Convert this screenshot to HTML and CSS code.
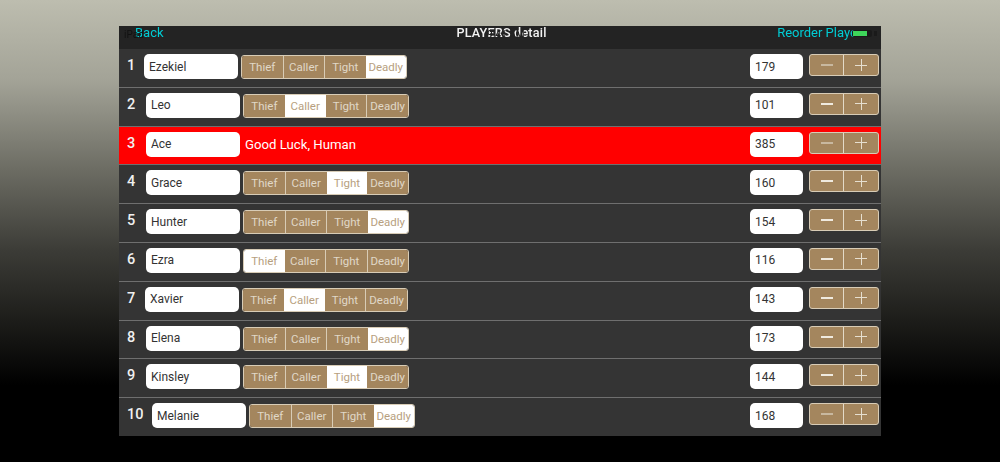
FILE: index.html
```html
<!DOCTYPE html>
<html lang="en">

<head>
    <meta charset="UTF-8">
    <meta name="viewport" content="width=device-width, initial-scale=1.0">
    <title>Players detail</title>
    <link rel="stylesheet" href="styles.css">
</head>

<body>

    <div class="panel">
        <div class="header">
            <a class="nav-link">Back</a>
            <span class="title">PLAYERS detail</span>
            <a class="nav-link nav-right">Reorder Players</a>

            <!-- device status bar shows through the nav bar -->
            <span class="status-carrier">iPad</span>
            <span class="status-time">9:41 AM</span>
            <span class="status-battery"><span class="status-charge"></span></span>
            <span class="status-bolt"></span>
        </div>

        <div class="row">
            <span class="num num-1">1</span>
            <input class="name" type="text" value="Ezekiel">
            <div class="seg">
                <button>Thief</button><button>Caller</button><button>Tight</button><button class="on">Deadly</button>
            </div>
            <input class="score" type="text" value="179">
            <div class="stepper"><button class="minus dim"></button><button class="plus"></button></div>
        </div>

        <div class="row">
            <span class="num">2</span>
            <input class="name" type="text" value="Leo">
            <div class="seg">
                <button>Thief</button><button class="on">Caller</button><button>Tight</button><button>Deadly</button>
            </div>
            <input class="score" type="text" value="101">
            <div class="stepper"><button class="minus"></button><button class="plus"></button></div>
        </div>

        <div class="row row-out">
            <span class="num">3</span>
            <input class="name" type="text" value="Ace">
            <span class="luck">Good Luck, Human</span>
            <input class="score" type="text" value="385">
            <div class="stepper"><button class="minus dim"></button><button class="plus"></button></div>
        </div>

        <div class="row">
            <span class="num">4</span>
            <input class="name" type="text" value="Grace">
            <div class="seg">
                <button>Thief</button><button>Caller</button><button class="on">Tight</button><button>Deadly</button>
            </div>
            <input class="score" type="text" value="160">
            <div class="stepper"><button class="minus"></button><button class="plus"></button></div>
        </div>

        <div class="row">
            <span class="num">5</span>
            <input class="name" type="text" value="Hunter">
            <div class="seg">
                <button>Thief</button><button>Caller</button><button>Tight</button><button class="on">Deadly</button>
            </div>
            <input class="score" type="text" value="154">
            <div class="stepper"><button class="minus"></button><button class="plus"></button></div>
        </div>

        <div class="row">
            <span class="num">6</span>
            <input class="name" type="text" value="Ezra">
            <div class="seg">
                <button class="on">Thief</button><button>Caller</button><button>Tight</button><button>Deadly</button>
            </div>
            <input class="score" type="text" value="116">
            <div class="stepper"><button class="minus"></button><button class="plus"></button></div>
        </div>

        <div class="row">
            <span class="num num-7">7</span>
            <input class="name" type="text" value="Xavier">
            <div class="seg">
                <button>Thief</button><button class="on">Caller</button><button>Tight</button><button>Deadly</button>
            </div>
            <input class="score" type="text" value="143">
            <div class="stepper"><button class="minus"></button><button class="plus"></button></div>
        </div>

        <div class="row">
            <span class="num">8</span>
            <input class="name" type="text" value="Elena">
            <div class="seg">
                <button>Thief</button><button>Caller</button><button>Tight</button><button class="on">Deadly</button>
            </div>
            <input class="score" type="text" value="173">
            <div class="stepper"><button class="minus"></button><button class="plus"></button></div>
        </div>

        <div class="row">
            <span class="num">9</span>
            <input class="name" type="text" value="Kinsley">
            <div class="seg">
                <button>Thief</button><button>Caller</button><button class="on">Tight</button><button>Deadly</button>
            </div>
            <input class="score" type="text" value="144">
            <div class="stepper"><button class="minus"></button><button class="plus"></button></div>
        </div>

        <div class="row">
            <span class="num num-10">10</span>
            <input class="name" type="text" value="Melanie">
            <div class="seg">
                <button>Thief</button><button>Caller</button><button>Tight</button><button class="on">Deadly</button>
            </div>
            <input class="score" type="text" value="168">
            <div class="stepper"><button class="minus dim"></button><button class="plus"></button></div>
        </div>
    </div>

</body>

</html>
```

FILE: styles.css
```css
html,
body {
    height: 100%;
}

body {
    margin: 0;
    overflow: hidden;
    font-family: 'Roboto', 'Liberation Sans', sans-serif;
    background: linear-gradient(to bottom, #bdbdaf 0, #a3a397 80px, #6c6c63 170px, #3c3c37 250px, #1d1d1a 320px, #000 385px);
}

.panel {
    width: 762px;
    height: 410px;
    margin: 26px auto 0;
    display: flex;
    flex-direction: column;
    background-color: #343434;
    /* the capture is a little soft */
    filter: blur(0.4px);
}

.header {
    position: relative;
    flex: 0 0 23px;
    box-sizing: border-box;
    display: grid;
    grid-template-columns: 1fr auto 1fr;
    align-items: center;
    padding: 0 13px 9px 16px;
    line-height: 14px;
    background-color: #232323;
}

.nav-link {
    font-size: 13px;
    color: #00ccd4;
}

.nav-right {
    text-align: right;
}

.title {
    font-size: 12.6px;
    font-weight: 500;
    letter-spacing: 0.2px;
    color: #f2f2f2;
}

.status-carrier {
    position: absolute;
    left: 5px;
    top: 2px;
    font-size: 10px;
    color: #111;
}

.status-time {
    position: absolute;
    left: 368px;
    top: 2px;
    font-size: 10px;
    font-weight: 500;
    color: #222;
}

.status-battery {
    position: absolute;
    left: 733px;
    top: 4px;
    width: 20px;
    height: 7px;
    border-radius: 2px;
    background-color: #1a1a1a;
}

.status-charge {
    display: block;
    width: 14px;
    height: 5px;
    margin: 1px;
    background-color: #3ed65a;
}

.status-bolt {
    position: absolute;
    left: 755px;
    top: 5px;
    width: 3px;
    height: 5px;
    background-color: #1a1a1a;
}

.row {
    flex: 1;
    display: flex;
    align-items: flex-start;
    padding: 5px 2px 0 8px;
    box-sizing: border-box;
    border-bottom: 1px solid #6f6f6f;
}

.row:last-child {
    border-bottom: none;
}

.row-out {
    background-color: #ff0000;
}

.num {
    width: 19px;
    flex: none;
    font-size: 14.5px;
    font-weight: 500;
    line-height: 24px;
    color: #f0f0f0;
}

.num-1 {
    width: 17px;
}

.num-7 {
    width: 18px;
}

.num-10 {
    width: 25px;
}

.name,
.score {
    height: 25px;
    box-sizing: border-box;
    border: none;
    border-radius: 5px;
    background-color: #fff;
    color: #333;
    font-family: inherit;
    font-size: 12px;
    padding: 0 5px;
}

.name {
    width: 94px;
    flex: none;
}

.score {
    width: 53px;
    flex: none;
    margin-left: auto;
}

.seg {
    display: flex;
    width: 166px;
    height: 24px;
    box-sizing: border-box;
    margin: 1px 0 0 3px;
    border: 1px solid #d8ccb6;
    border-radius: 3px;
    overflow: hidden;
}

.seg button {
    flex: 1;
    padding: 0;
    border: none;
    border-left: 1px solid #d8ccb6;
    background-color: #a4865e;
    color: #e0d8c8;
    font-family: inherit;
    font-size: 11.5px;
}

.seg button:first-child {
    border-left: none;
}

.seg .on {
    border-left: none;
    background-color: #fff;
    color: #b79f7f;
}

.seg .on + button {
    border-left: none;
}

.luck {
    margin-left: 5px;
    font-size: 13.2px;
    line-height: 26px;
    color: #fff;
}

.stepper {
    display: flex;
    width: 70px;
    height: 22px;
    flex: none;
    box-sizing: border-box;
    margin-left: 6px;
    border: 1px solid #d8ccb6;
    border-radius: 3px;
    overflow: hidden;
    background-color: #a4865e;
}

.stepper button {
    padding: 0;
    border: none;
    background-color: transparent;
    background-repeat: no-repeat;
    background-position: center;
}

.minus {
    flex: 1;
    background-image: linear-gradient(#f0eadf, #f0eadf);
    background-size: 12px 2px;
}

.minus.dim {
    background-image: linear-gradient(#c8b89f, #c8b89f);
}

.stepper .plus {
    width: 35px;
    flex: none;
    border-left: 1px solid #e3dac8;
    background-image: linear-gradient(#e6dfd0, #e6dfd0), linear-gradient(#e6dfd0, #e6dfd0);
    background-size: 12px 1px, 1px 12px;
}
```
